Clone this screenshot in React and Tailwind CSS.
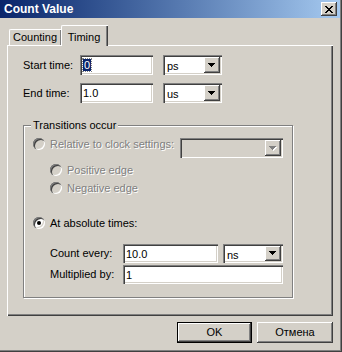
import React from "react";

const RAISED =
  "shadow-[inset_-1px_-1px_0_#404040,inset_1px_1px_0_#ffffff,inset_-2px_-2px_0_#808080,inset_2px_2px_0_#d4d0c8]";
const SUNKEN =
  "shadow-[inset_1px_1px_0_#808080,inset_2px_2px_0_#404040,inset_-1px_-1px_0_#ffffff,inset_-2px_-2px_0_#d4d0c8]";
const DIS = "text-[#808080] [text-shadow:1px_1px_0_#ffffff]";

function Arrow({ disabled }) {
  return (
    <svg width="8" height="5" viewBox="0 0 8 5">
      {disabled && (
        <path d="M1 1h7v1H1z M2 2h5v1H2z M3 3h3v1H3z M4 4h1v1H4z" fill="#ffffff" />
      )}
      <path
        d="M0 0h7v1H0z M1 1h5v1H1z M2 2h3v1H2z M3 3h1v1H3z"
        fill={disabled ? "#808080" : "#000000"}
      />
    </svg>
  );
}

function Combo({ value, w, h = "h-[20px]", disabled }) {
  return (
    <div
      className={`flex p-[2px] ${h} ${w} ${SUNKEN} ${disabled ? "bg-[#d4d0c8]" : "bg-white"}`}
    >
      <div className="flex-1 pl-[2px] pt-[2px] leading-[14px]">{value}</div>
      <div className={`flex w-[16px] items-center justify-center bg-[#d4d0c8] ${RAISED}`}>
        <Arrow disabled={disabled} />
      </div>
    </div>
  );
}

function Edit({ children, w, h = "h-[20px]" }) {
  return (
    <div className={`bg-white pl-[3px] pt-[3px] leading-[14px] ${h} ${w} ${SUNKEN}`}>
      {children}
    </div>
  );
}

function Radio({ checked, disabled }) {
  return (
    <div
      className={`flex h-[12px] w-[12px] shrink-0 items-center justify-center rounded-full ${SUNKEN} ${
        disabled ? "bg-[#d4d0c8]" : "bg-white"
      }`}
    >
      {checked && <div className="h-[4px] w-[4px] rounded-full bg-black" />}
    </div>
  );
}

export default function App() {
  return (
    <div
      className={`flex h-[352px] w-[342px] flex-col bg-[#d4d0c8] font-['Liberation_Sans',Arial,sans-serif] text-[11px] text-black shadow-[inset_-1px_-1px_0_#404040,inset_-2px_-2px_0_#808080]`}
    >
      {/* Title bar */}
      <div className="mr-[2px] flex h-[18px] items-center justify-between bg-linear-to-r from-[#0a246a] to-[#a6caf0] pl-[4px] pr-[3px]">
        <span className="text-[12px] font-bold leading-none text-white">Count Value</span>
        <div className={`flex h-[14px] w-[16px] items-center justify-center bg-[#d4d0c8] ${RAISED}`}>
          <svg width="8" height="7" viewBox="0 0 8 7">
            <path
              d="M0 0h2v1H0z M6 0h2v1H6z M1 1h2v1H1z M5 1h2v1H5z M2 2h4v1H2z M3 3h2v1H3z M2 4h4v1H2z M1 5h2v1H1z M5 5h2v1H5z M0 6h2v1H0z M6 6h2v1H6z"
              fill="#000"
            />
          </svg>
        </div>
      </div>

      <div className="flex flex-col pl-[7px] pt-[7px]">
        {/* Tabs */}
        <div className="flex h-[20px] items-end">
          <div className="ml-[2px] flex h-[16px] w-[53px] items-center justify-center rounded-tl-[2px] border-l border-t border-white shadow-[inset_-1px_0_0_#404040,inset_-2px_0_0_#808080]">
            <span className="pr-[2px]">Counting</span>
          </div>
          <div className="relative z-10 -mb-px -ml-px flex h-[21px] w-[47px] items-start justify-center rounded-tl-[2px] border-l border-t border-white bg-[#d4d0c8] pt-[3px] shadow-[inset_-1px_0_0_#404040,inset_-2px_0_0_#808080]">
            <span className="pr-[2px]">Timing</span>
          </div>
        </div>

        {/* Panel */}
        <div className="flex h-[271px] w-[326px] flex-col pl-[16px] pt-[10px] shadow-[inset_1px_1px_0_#ffffff,inset_-1px_-1px_0_#404040,inset_-2px_-2px_0_#808080]">
          <div className="flex h-[20px] items-center">
            <div className="w-[57px]">Start time:</div>
            <Edit w="w-[73px]">
              <span className="bg-[#0a246a] px-[1px] text-white outline-1 outline-dotted outline-[#808080]">0</span>
            </Edit>
            <div className="ml-[10px]">
              <Combo value="ps" w="w-[59px]" />
            </div>
          </div>
          <div className="mt-[8px] flex h-[20px] items-center">
            <div className="w-[57px]">End time:</div>
            <Edit w="w-[73px]">1.0</Edit>
            <div className="ml-[10px]">
              <Combo value="us" w="w-[59px]" />
            </div>
          </div>

          {/* Group box */}
          <div className="relative mt-[22px] flex h-[173px] w-[270px] flex-col border border-[#808080] pl-[9px] pr-[9px] pt-[12px] shadow-[1px_1px_0_#ffffff,inset_1px_1px_0_#ffffff]">
            <span className="absolute left-[7px] top-[-8px] bg-[#d4d0c8] px-[2px] leading-[14px]">
              Transitions occur
            </span>

            <div className="flex items-start">
              <Radio disabled />
              <span className={`ml-[5px] flex-1 leading-[12px] ${DIS}`}>Relative to clock settings:</span>
              <Combo value="" w="w-[103px]" disabled />
            </div>
            <div className="ml-[17px] mt-[6px] flex items-center">
              <Radio disabled />
              <span className={`ml-[5px] leading-[12px] ${DIS}`}>Positive edge</span>
            </div>
            <div className="ml-[17px] mt-[6px] flex items-center">
              <Radio disabled />
              <span className={`ml-[5px] leading-[12px] ${DIS}`}>Negative edge</span>
            </div>

            <div className="mt-[23px] flex items-center">
              <Radio checked />
              <span className="ml-[5px] leading-[12px]">At absolute times:</span>
            </div>

            <div className="ml-[17px] mt-[15px] flex h-[19px] items-center">
              <div className="w-[73px]">Count every:</div>
              <Edit w="w-[95px]" h="h-[19px]">10.0</Edit>
              <div className="ml-[5px]">
                <Combo value="ns" w="w-[60px]" h="h-[19px]" />
              </div>
            </div>
            <div className="ml-[17px] mt-[2px] flex h-[19px] items-center">
              <div className="w-[73px]">Multiplied by:</div>
              <Edit w="w-[160px]" h="h-[19px]">1</Edit>
            </div>
          </div>
        </div>

        {/* Buttons */}
        <div className="mt-[6px] flex justify-end gap-[5px] pr-[9px]">
          <div className="flex h-[21px] w-[75px] items-center justify-center border border-black shadow-[inset_-1px_-1px_0_#404040,inset_1px_1px_0_#ffffff,inset_-2px_-2px_0_#808080]">
            OK
          </div>
          <div className={`flex h-[21px] w-[76px] items-center justify-center ${RAISED}`}>
            Отмена
          </div>
        </div>
      </div>
    </div>
  );
}
